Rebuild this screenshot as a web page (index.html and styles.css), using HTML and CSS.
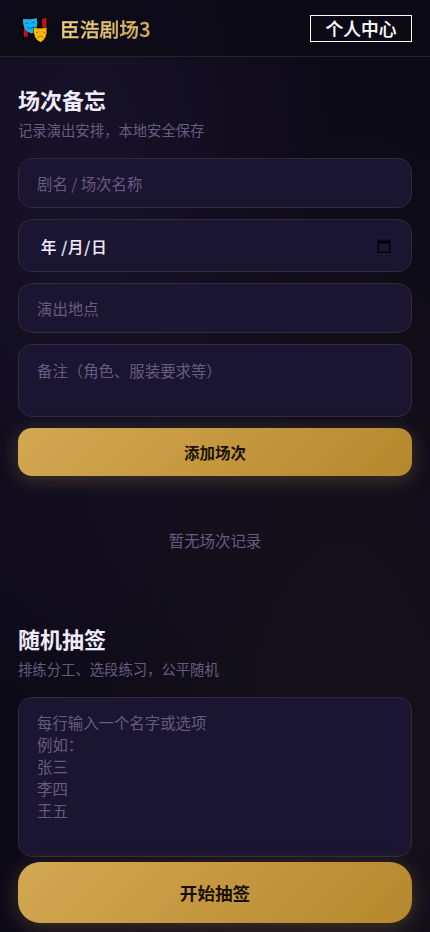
FILE: index.html
```html
<!DOCTYPE html>
<html lang="zh-CN">
<head>
<meta charset="utf-8">
<meta name="viewport" content="width=device-width, initial-scale=1">
<title>臣浩剧场3</title>
<link rel="stylesheet" href="styles.css">
</head>
<body>
<header class="header">
  <div class="brand">
    <svg class="logo" viewBox="0 0 26 28" aria-hidden="true">
      <g stroke="#000" stroke-width="2.8" stroke-linejoin="round">
        <path d="M1.800 9v13l2-2 2 2V11zM20 1.800l1.500 1.500L24.500 1.200V18l-4-2z"/>
        <path d="M1 3q6.500 1.500 13.500-1.200Q17 14 10 17.800 0 15 1 3z"/>
        <path d="M12 11.500q6.500 2 12.800 0Q26 23 18.500 26.500 11 23 12 11.500z"/>
      </g>
      <path fill="#c1121f" d="M1.800 9v13l2-2 2 2V11zM20 1.800l1.500 1.500L24.500 1.200V18l-4-2z"/>
      <path fill="#13b4f0" d="M1 2.800q6.500 1.200 13.700-.800Q17 14 10 17.800 0 15 1 2.800z"/>
      <path fill="none" stroke="#086ca4" d="M3.500 7.500q1.500-1.500 3 0M9.500 7q1.500-1.500 3 0M5 11.500q4 2.500 7-1"/>
      <path fill="#fdb90a" stroke="#000" stroke-width=".5" d="M11.500 11.500q6.500 1.500 13.300 0Q26 23 18.500 26.500 10.500 23 11.500 11.500z"/>
      <path fill="none" stroke="#a86400" stroke-width=".9" d="M14 16.500q1.500.5 2.500-1M20.500 15.500q1 1.500 2.500 1M15.500 21.500q3-3 6 0"/>
    </svg>
    <span class="brand-name">臣浩剧场3</span>
  </div>
  <button class="profile">个人中心</button>
</header>
<main class="main">
  <section class="section">
    <h2 class="title">场次备忘</h2>
    <p class="subtitle">记录演出安排，本地安全保存</p>
    <form class="form">
      <input class="field" type="text" placeholder="剧名 / 场次名称">
      <div class="field date">
        <span class="date-text"><span class="year">年</span><span class="slash">/</span>月<span class="slash">/</span>日</span>
        <svg class="calendar" viewBox="0 0 14 15" aria-hidden="true"><path fill="#000" fill-rule="evenodd" d="M2 0h1.300v1.500h7.400V0H12v1.500h.5q1 0 1 1V13q0 1-1 1h-11q-1 0-1-1V2.500q0-1 1-1H2zM1.700 4.500v8.300h10.600V4.500z"/></svg>
      </div>
      <input class="field" type="text" placeholder="演出地点">
      <textarea class="field notes" placeholder="备注（角色、服装要求等）"></textarea>
      <button class="primary" type="button">添加场次</button>
    </form>
    <p class="empty">暂无场次记录</p>
  </section>
  <section class="section">
    <h2 class="title">随机抽签</h2>
    <p class="subtitle">排练分工、选段练习，公平随机</p>
    <textarea class="field names" placeholder="每行输入一个名字或选项&#10;例如：&#10;张三&#10;李四&#10;王五"></textarea>
    <button class="primary draw" type="button">开始抽签</button>
  </section>
</main>
</body>
</html>
```
FILE: styles.css
```css
* { box-sizing: border-box; margin: 0; }
html { height: 100%; background: #0d0a18; }
body {
  height: 100vh;
  overflow: hidden;
  color: #f0eafa;
  font-family: "Noto Sans CJK SC", sans-serif;
  background:
    radial-gradient(ellipse at 20% 20%, rgba(45, 35, 75, .35) 0%, transparent 50%),
    radial-gradient(ellipse at 80% 80%, rgba(180, 165, 83, .06) 0%, transparent 60%),
    #0d0a18;
}
button, input, textarea { font-family: inherit; }
.header {
  display: flex;
  align-items: center;
  justify-content: space-between;
  height: 57px;
  padding: 0 18px;
  border-bottom: 1px solid #2c2320;
  background: rgba(13, 10, 24, .85);
}
.brand { display: flex; align-items: center; gap: 12px; padding-left: 4px; }
.logo { width: 26px; height: 28px; margin-top: 3px; overflow: visible; }
.brand-name {
  font-size: 19.8px;
  line-height: 28px;
  font-weight: 500;
  color: transparent;
  -webkit-text-stroke: .3px transparent;
  background: linear-gradient(135deg, #f0d48a, #d4a853);
  background-clip: text;
  -webkit-background-clip: text;
  margin-top: 2px;
}
.profile {
  width: 102px;
  height: 27px;
  padding: 0;
  border: 1px solid #fff;
  background: transparent;
  color: #fff;
  font-size: 17.7px;
  font-weight: 500;
  line-height: 25px;
  -webkit-text-stroke: .15px #fff;
}
.main { padding: 26px 18px 0; }
.title { font-size: 22px; line-height: 32px; font-weight: 700; }
.subtitle { margin-top: 4px; margin-bottom: 18px; font-size: 14.35px; line-height: 21px; color: #695b80; }
.form { display: flex; flex-direction: column; gap: 11px; }
.field {
  display: block;
  width: 100%;
  height: 50px;
  padding: 13px 18px;
  border: 1px solid #352937;
  border-radius: 14px;
  outline: none;
  resize: none;
  overflow: hidden;
  background: #1a1530;
  color: #f0eafa;
  font-size: 15.4px;
  line-height: 22px;
}
.field::placeholder { color: #695b80; opacity: 1; }
.date {
  display: flex;
  align-items: center;
  justify-content: space-between;
  height: 53px;
  padding: 0 20px 0 22px;
  font-weight: 500;
  -webkit-text-stroke: .15px #f0eafa;
}
.year { margin-right: 4px; }
.slash { display: inline-block; width: 7.7px; text-align: center; }
.calendar { width: 14px; height: 15px; margin-top: 1px; }
.notes { height: 73px; padding-top: 14px; }
.names { height: 160px; padding-top: 13px; }
.primary {
  width: 100%;
  height: 48px;
  padding: 0;
  border: 0;
  border-radius: 14px;
  background: linear-gradient(135deg, #d4a853, #b5882d);
  box-shadow: 0 4px 20px rgba(212, 168, 83, .25);
  color: #1a1000;
  font-size: 15.5px;
  font-weight: 700;
}
.empty { padding: 53px 0 71px; text-align: center; font-size: 15.4px; line-height: 22px; color: #695b80; }
.draw { display: block; height: 61px; margin-top: 5px; border-radius: 22px; font-size: 17.6px; }
```
